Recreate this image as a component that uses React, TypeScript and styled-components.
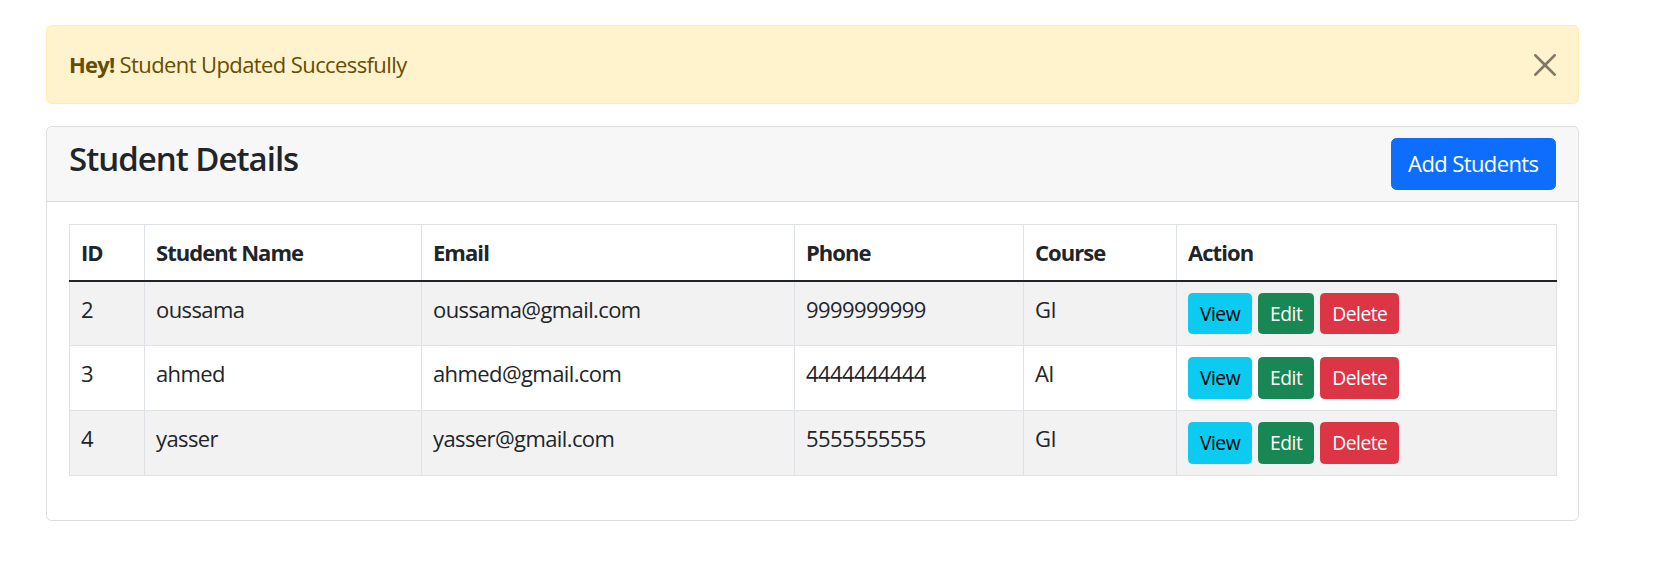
import React from "react";
import styled, { createGlobalStyle } from "styled-components";

const Global = createGlobalStyle`
  * { box-sizing: border-box; }
  body {
    margin: 0;
    background: #fff;
    font-family: "Open Sans", "Noto Sans", sans-serif;
    font-size: 22px;
    line-height: 33px;
    color: #212529;
  }
`;

const Page = styled.div`
  padding: 25px 0 0 46px;
  width: 1579px;
`;

const Alert = styled.div`
  display: flex;
  align-items: center;
  justify-content: space-between;
  background: #fff3cd;
  border: 1px solid #ffecb5;
  border-radius: 5.5px;
  color: #664d03;
  padding: 22px;
  margin-bottom: 22px;
`;

const AlertText = styled.div`
  letter-spacing: -0.6px;
  strong { font-weight: 700; letter-spacing: -0.8px; }
`;

const CloseBtn = styled.button`
  width: 22px;
  height: 22px;
  padding: 0;
  border: 0;
  background: transparent;
  opacity: 0.5;
  display: flex;
  cursor: pointer;
  svg { width: 22px; height: 22px; }
`;

const Card = styled.div`
  border: 1px solid rgba(0, 0, 0, 0.125);
  border-radius: 5.5px;
  overflow: hidden;
`;

const CardHeader = styled.div`
  display: flex;
  align-items: flex-start;
  justify-content: space-between;
  padding: 11px 22px;
  background: rgba(0, 0, 0, 0.03);
  border-bottom: 1px solid rgba(0, 0, 0, 0.125);
`;

const Title = styled.h4`
  margin: 0;
  padding-top: 1px;
  font-size: 33px;
  line-height: 39.6px;
  font-weight: 600;
  letter-spacing: -1px;
`;

type Variant = "primary" | "info" | "success" | "danger";
const palette: Record<Variant, { bg: string; fg: string }> = {
  primary: { bg: "#0d6efd", fg: "#fff" },
  info: { bg: "#0dcaf0", fg: "#000" },
  success: { bg: "#198754", fg: "#fff" },
  danger: { bg: "#dc3545", fg: "#fff" },
};

const Button = styled.button<{ $variant: Variant; $small?: boolean }>`
  font-family: inherit;
  display: inline-block;
  border: 1.375px solid ${(p) => palette[p.$variant].bg};
  background: ${(p) => palette[p.$variant].bg};
  color: ${(p) => palette[p.$variant].fg};
  font-size: ${(p) => (p.$small ? "19.25px" : "22px")};
  line-height: ${(p) => (p.$small ? "28.9px" : "33px")};
  padding: ${(p) => (p.$small ? "6px 11px 5px" : "8.25px 16.5px")};
  border-radius: ${(p) => (p.$small ? "4.4px" : "5.5px")};
  letter-spacing: ${(p) => (p.$small ? "-0.5px" : "-0.6px")};
  font-weight: 400;
  cursor: pointer;
`;

const CardBody = styled.div`
  padding: 22px 22px 44px 22px;
`;

const Table = styled.table`
  width: 100%;
  border-collapse: collapse;
  table-layout: fixed;
  vertical-align: top;
  border: 1px solid #dee2e6;
`;

const Col = styled.col<{ $w: number }>`
  width: ${(p) => p.$w}px;
`;

const Th = styled.th`
  text-align: left;
  font-weight: 700;
  padding: 11px;
  border: 1px solid #dee2e6;
  border-bottom: 2px solid #212529;
  letter-spacing: -0.95px;
`;

const Row = styled.tr<{ $striped: boolean }>`
  background: ${(p) => (p.$striped ? "#f2f2f2" : "#fff")};
`;

const Td = styled.td`
  padding: 11px;
  border: 1px solid #dee2e6;
  vertical-align: top;
  letter-spacing: -0.6px;
`;

const Actions = styled.div`
  display: flex;
  gap: 6px;
`;

const students = [
  { id: 2, name: "oussama", email: "oussama@gmail.com", phone: "9999999999", course: "GI" },
  { id: 3, name: "ahmed", email: "ahmed@gmail.com", phone: "4444444444", course: "AI" },
  { id: 4, name: "yasser", email: "yasser@gmail.com", phone: "5555555555", course: "GI" },
];

const cols = [75, 277, 373, 229, 153, 380];
const heads = ["ID", "Student Name", "Email", "Phone", "Course", "Action"];

export default function App() {
  return (
    <>
      <Global />
      <Page>
        <Alert>
          <AlertText>
            <strong>Hey!</strong> Student Updated Successfully
          </AlertText>
          <CloseBtn aria-label="Close">
            <svg viewBox="0 0 16 16">
              <path
                fill="#000"
                d="M.293.293a1 1 0 0 1 1.414 0L8 6.586 14.293.293a1 1 0 1 1 1.414 1.414L9.414 8l6.293 6.293a1 1 0 0 1-1.414 1.414L8 9.414l-6.293 6.293a1 1 0 0 1-1.414-1.414L6.586 8 .293 1.707a1 1 0 0 1 0-1.414z"
              />
            </svg>
          </CloseBtn>
        </Alert>
        <Card>
          <CardHeader>
            <Title>Student Details</Title>
            <Button $variant="primary">Add Students</Button>
          </CardHeader>
          <CardBody>
            <Table>
              <colgroup>
                {cols.map((w, i) => (
                  <Col key={i} $w={w} />
                ))}
              </colgroup>
              <thead>
                <tr>
                  {heads.map((h) => (
                    <Th key={h}>{h}</Th>
                  ))}
                </tr>
              </thead>
              <tbody>
                {students.map((s, i) => (
                  <Row key={s.id} $striped={i % 2 === 0}>
                    <Td>{s.id}</Td>
                    <Td>{s.name}</Td>
                    <Td>{s.email}</Td>
                    <Td>{s.phone}</Td>
                    <Td>{s.course}</Td>
                    <Td>
                      <Actions>
                        <Button $variant="info" $small>View</Button>
                        <Button $variant="success" $small>Edit</Button>
                        <Button $variant="danger" $small>Delete</Button>
                      </Actions>
                    </Td>
                  </Row>
                ))}
              </tbody>
            </Table>
          </CardBody>
        </Card>
      </Page>
    </>
  );
}
